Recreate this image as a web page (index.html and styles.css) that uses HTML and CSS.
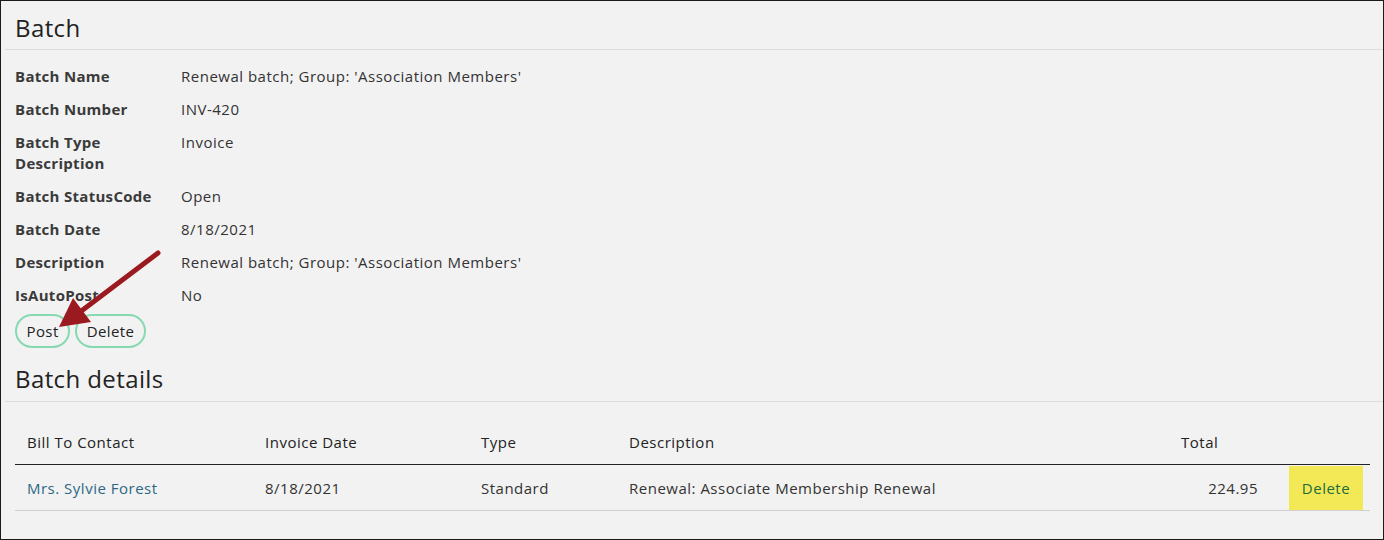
FILE: index.html
```html
<!DOCTYPE html>
<html lang="en">

<head>
    <meta charset="UTF-8">
    <meta name="viewport" content="width=device-width, initial-scale=1.0">
    <title>Batch</title>
    <link rel="stylesheet" href="styles.css">
</head>

<body>
    <div class="page">
        <h2 class="section-title">Batch</h2>

        <div class="fields">
            <div class="field-label">Batch Name</div>
            <div class="field-value">Renewal batch; Group: 'Association Members'</div>
            <div class="field-label">Batch Number</div>
            <div class="field-value">INV-420</div>
            <div class="field-label">Batch Type<br>Description</div>
            <div class="field-value">Invoice</div>
            <div class="field-label">Batch StatusCode</div>
            <div class="field-value">Open</div>
            <div class="field-label">Batch Date</div>
            <div class="field-value">8/18/2021</div>
            <div class="field-label">Description</div>
            <div class="field-value">Renewal batch; Group: 'Association Members'</div>
            <div class="field-label">IsAutoPost</div>
            <div class="field-value">No</div>
        </div>

        <div class="actions">
            <button class="pill-button" type="button">Post</button>
            <button class="pill-button" type="button">Delete</button>
        </div>

        <h2 class="section-title details-title">Batch details</h2>

        <table class="details-table">
            <colgroup>
                <col class="col-contact">
                <col class="col-date">
                <col class="col-type">
                <col class="col-desc">
                <col class="col-total">
                <col class="col-action">
            </colgroup>
            <thead>
                <tr>
                    <th>Bill To Contact</th>
                    <th>Invoice Date</th>
                    <th>Type</th>
                    <th>Description</th>
                    <th>Total</th>
                    <th></th>
                </tr>
            </thead>
            <tbody>
                <tr>
                    <td><a class="contact-link" href="#">Mrs. Sylvie Forest</a></td>
                    <td>8/18/2021</td>
                    <td>Standard</td>
                    <td>Renewal: Associate Membership Renewal</td>
                    <td class="amount">224.95</td>
                    <td class="action-cell"><a class="delete-link" href="#">Delete</a></td>
                </tr>
            </tbody>
        </table>
    </div>

    <!-- callout arrow pointing at the Post button -->
    <svg class="callout" width="1384" height="540" viewBox="0 0 1384 540">
        <line x1="158" y1="253" x2="80" y2="312" stroke="#9b1a20" stroke-width="5" stroke-linecap="round" />
        <polygon points="59,327 73,298 91,322" fill="#9b1a20" />
    </svg>
</body>

</html>
```

FILE: styles.css
```css
html, body {
    margin: 0;
    height: 100%;
}

body {
    background: #f2f2f2;
    color: #333;
    font-family: 'Open Sans', 'Liberation Sans', sans-serif;
    font-size: 15px;
    letter-spacing: 0.5px;
    border: 1px solid #1a1a1a;
    box-sizing: border-box;
    position: relative;
    overflow: hidden;
}

.page {
    margin-left: 4px;
}

.section-title {
    margin: 0;
    padding: 12px 10px 6px;
    font-size: 24px;
    line-height: 30px;
    font-weight: 400;
    color: #222;
    letter-spacing: 0.4px;
    border-bottom: 1px solid #dcdcdc;
}

.fields {
    display: grid;
    grid-template-columns: 166px 1fr;
    row-gap: 12px;
    margin: 16px 10px 0;
    line-height: 21px;
}

.field-label {
    font-weight: 700;
    color: #3a3a3a;
    letter-spacing: 0.3px;
}

.field-value {
    color: #333;
}

.actions {
    display: flex;
    gap: 5px;
    margin: 8px 10px 0;
}

.pill-button {
    height: 34px;
    padding: 0 9.5px;
    border: 2px solid #86d9b0;
    border-radius: 17px;
    background: transparent;
    font-family: inherit;
    font-size: 15px;
    letter-spacing: 0.4px;
    color: #222;
    cursor: pointer;
}

.details-title {
    margin-top: 5px;
    padding-top: 11px;
    padding-bottom: 7px;
}

.details-table {
    width: 1355px;
    margin: 18px 10px 0;
    border-collapse: collapse;
    table-layout: fixed;
}

.col-contact { width: 238px; }
.col-date { width: 216px; }
.col-type { width: 148px; }
.col-desc { width: 552px; }
.col-total { width: 101px; }
.col-action { width: 100px; }

.details-table th {
    height: 44px;
    padding: 0 12px;
    text-align: left;
    font-weight: 400;
    color: #222;
    border-bottom: 1px solid #222;
}

.details-table td {
    height: 45px;
    padding: 0 12px;
    border-bottom: 1px solid #cfcfcf;
}

.details-table td.amount {
    text-align: right;
}

.details-table td.action-cell {
    padding: 0 7px 0 19px;
}

.contact-link {
    color: #2c6886;
    text-decoration: none;
}

.delete-link {
    display: block;
    width: 74px;
    line-height: 44px;
    text-align: center;
    background: #f3e957;
    color: #1f6b3c;
    text-decoration: none;
}

.callout {
    position: absolute;
    top: -1px;
    left: -1px;
    pointer-events: none;
}
```
